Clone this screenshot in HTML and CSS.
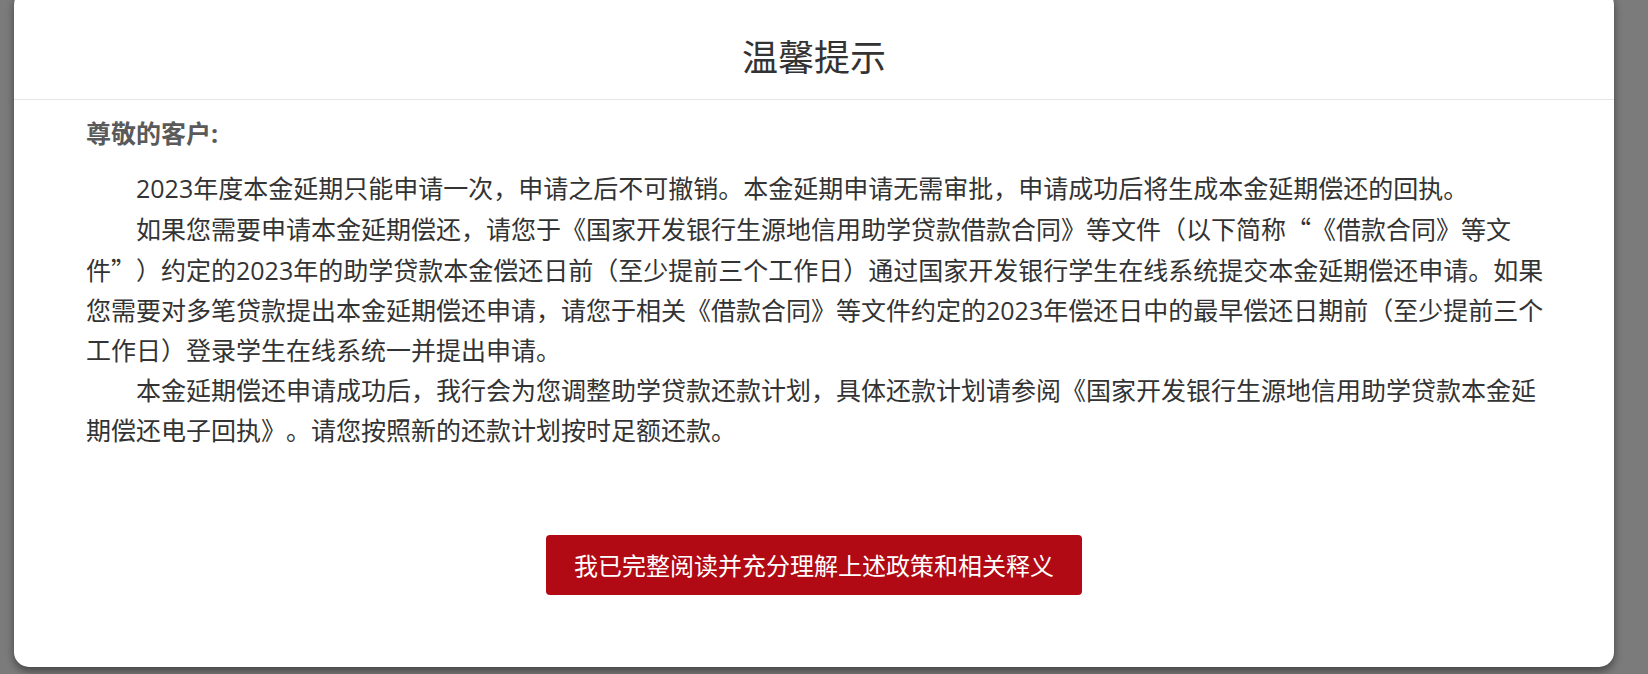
FILE: index.html
```html
<!DOCTYPE html>
<html lang="zh-CN">
<head>
<meta charset="utf-8">
<title>温馨提示</title>
<link rel="stylesheet" href="styles.css">
</head>
<body>
<div class="overlay">
  <div class="modal">
    <div class="modal-header">
      <h4 class="title">温馨提示</h4>
    </div>
    <div class="modal-body">
      <p class="greet">尊敬的客户:</p>
      <p class="para">2023年度本金延期只能申请一次，申请之后不可撤销。本金延期申请无需审批，申请成功后将生成本金延期偿还的回执。</p>
      <p class="para">如果您需要申请本金延期偿还，请您于《国家开发银行生源地信用助学贷款借款合同》等文件（以下简称<span class="q q-open">“</span>《借款合同》等文<span class="nb">件<span class="q q-close">”</span>）</span>约定的2023年的助学贷款本金偿还日前（至少提前三个工作日）通过国家开发银行学生在线系统提交本金延期偿还申请。如果您需要对多笔贷款提出本金延期偿还申请，请您于相关《借款合同》等文件约定的2023年偿还日中的最早偿还日期前（至少提前三个工作日）登录学生在线系统一并提出申请。</p>
      <p class="para">本金延期偿还申请成功后，我行会为您调整助学贷款还款计划，具体还款计划请参阅《国家开发银行生源地信用助学贷款本金延期偿还电子回执》。请您按照新的还款计划按时足额还款。</p>
    </div>
    <div class="modal-footer">
      <button class="btn-confirm" type="button">我已完整阅读并充分理解上述政策和相关释义</button>
    </div>
  </div>
</div>
</body>
</html>
```
FILE: styles.css
```css
html, body {
  margin: 0;
  height: 100%;
  overflow: hidden;
  background: #7b7b7b;
}

body {
  font-family: "Open Sans", "Noto Sans CJK SC", sans-serif;
  text-spacing-trim: space-all;
}

.overlay {
  padding-left: 14px;
}

.modal {
  width: 1600px;
  margin-top: -10px;
  background: #ffffff;
  border-radius: 15px;
  box-shadow: 0 4px 9px rgba(0, 0, 0, 0.45);
}

.modal-header {
  padding: 40px 0 19px;
  border-bottom: 1px solid #e5e5e5;
  text-align: center;
}

.title {
  margin: 0;
  font-family: "Noto Sans CJK SC", sans-serif;
  font-size: 36px;
  line-height: 50px;
  font-weight: normal;
  color: #333333;
}

.modal-body {
  padding: 13px 64px 0 72px;
}

.greet {
  margin: 0 0 15px;
  font-size: 25px;
  line-height: 40px;
  font-weight: bold;
  color: #5a5a5a;
}

.para {
  margin: 0;
  text-indent: 2em;
  font-size: 25px;
  line-height: 40px;
  color: #333333;
}

.q {
  display: inline-block;
  width: 1em;
  text-indent: 0;
  font-family: "Noto Sans CJK SC", sans-serif;
}

.q-open {
  text-align: right;
}

.q-close {
  text-align: left;
}

.nb {
  white-space: nowrap;
}

.modal-footer {
  padding: 85px 0 72px;
  text-align: center;
}

.btn-confirm {
  height: 60px;
  padding: 0 28px;
  border: none;
  border-radius: 4px;
  background: #b10a14;
  color: #ffffff;
  font-family: "Noto Sans CJK SC", sans-serif;
  font-size: 24px;
  line-height: 60px;
  cursor: pointer;
}
```
